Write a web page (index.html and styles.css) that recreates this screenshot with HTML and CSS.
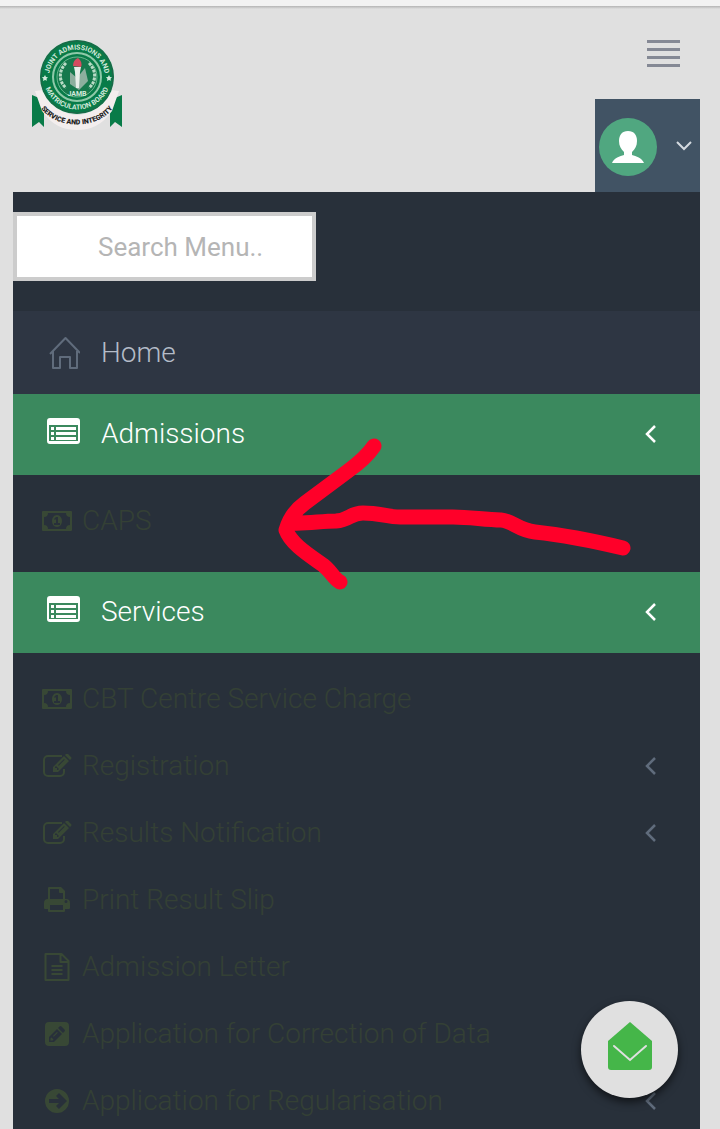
FILE: index.html
```html
<!DOCTYPE html>
<html lang="en">
<head>
  <meta charset="UTF-8">
  <meta name="viewport" content="width=device-width, initial-scale=1">
  <title>JAMB e-Facility</title>
  <link rel="stylesheet" href="styles.css">
</head>
<body>
  <!-- shared icons -->
  <svg class="sprite" aria-hidden="true">
    <symbol id="i-list" viewBox="0 0 33 26">
      <path fill="currentColor" fill-rule="evenodd" d="M3 0h27a3 3 0 0 1 3 3v20a3 3 0 0 1-3 3H3a3 3 0 0 1-3-3V3a3 3 0 0 1 3-3zM2 7v16h29V7zM4 9h3v3H4zM9 9h20v3H9zM4 14h3v3H4zM9 14h20v3H9zM4 19h3v3H4zM9 19h20v3H9z"/>
    </symbol>
    <symbol id="i-money" viewBox="0 0 30 20">
      <path fill="currentColor" fill-rule="evenodd" d="M1 0h28a1 1 0 0 1 1 1v18a1 1 0 0 1-1 1H1a1 1 0 0 1-1-1V1a1 1 0 0 1 1-1zM6 2a4 4 0 0 1-4 4v8a4 4 0 0 1 4 4h18a4 4 0 0 1 4-4V6a4 4 0 0 1-4-4zM15 4c3 0 5 3 5 6s-2 6-5 6-5-3-5-6 2-6 5-6zM14 6l-2 2 1 1 1-1v4h-2v2h6v-2h-2V6z"/>
    </symbol>
    <symbol id="i-edit" viewBox="0 0 30 24">
      <path fill="none" stroke="currentColor" stroke-width="2" d="M20 2H6a4 4 0 0 0-4 4v12a4 4 0 0 0 4 4h12a4 4 0 0 0 4-4v-3"/>
      <path fill="currentColor" fill-rule="evenodd" d="M11 13L22 2l5 5-11 11h-5zM23 1l1-1q1-1 2 0l3 3q1 1 0 2l-1 1zM13 13v1h2v2h1l1-1-3-3zM16 11l.7.7 6-6-.7-.7z"/>
    </symbol>
    <symbol id="i-print" viewBox="0 0 26 25">
      <path fill="currentColor" fill-rule="evenodd" d="M4 12V1q0-1 1-1h12l4 4v8h1a4 4 0 0 1 4 4v5q0 1-1 1h-4v2q0 1-1 1H5q-1 0-1-1v-2H1q-1 0-1-1v-5a4 4 0 0 1 4-4zM6 2v10h13V6h-3q-1 0-1-1V2zM6 18v5h13v-5zM22 13a1 1 0 1 0 0 3 1 1 0 0 0 0-3z"/>
    </symbol>
    <symbol id="i-file" viewBox="0 0 25 28">
      <path fill="none" stroke="currentColor" stroke-width="2" stroke-linejoin="round" d="M1 1h16l7 7v19H1zM16 1v8h8M7 13h11M7 17h11M7 21h11"/>
    </symbol>
    <symbol id="i-pencil" viewBox="0 0 24 24">
      <path fill="currentColor" fill-rule="evenodd" d="M4 0h16a4 4 0 0 1 4 4v16a4 4 0 0 1-4 4H4a4 4 0 0 1-4-4V4a4 4 0 0 1 4-4zM4 15v5h5l8-8-5-5zM13 6l5 5 1.500-1.500q1-1 0-2l-3-3q-1-1-2 0zM5.500 16.500l1-1 2 2-1 1h-2zM8 14l4-4 .8.8-4 4z"/>
    </symbol>
    <symbol id="i-go" viewBox="0 0 24 24">
      <path fill="currentColor" fill-rule="evenodd" d="M12 0a12 12 0 1 1 0 24 12 12 0 0 1 0-24zM11 7l3 3H4v4h10l-3 3 3 3 8-8-8-8z"/>
    </symbol>
    <symbol id="i-left" viewBox="0 0 12 20">
      <path fill="none" stroke="currentColor" stroke-width="2.500" d="M10 2L2 10l8 8"/>
    </symbol>
  </svg>

  <div class="page">
    <header class="header">
      <div class="topbar">
        <a class="logo" href="#" aria-label="Joint Admissions and Matriculation Board">
          <svg width="94" height="92" viewBox="0 0 94 92">
            <path fill="#087b48" d="M2 57l12 5v27l-5-5-7 5zM92 57l-12 5v27l5-5 7 5z"/>
            <path fill="#f3eeee" d="M5 53l8-1c9 18 24 25 34 25s25-7 34-25l8 1-7 20C72 87 61 92 47 92S22 87 12 73z"/>
            <circle cx="47" cy="39" r="37" fill="#087b48"/>
            <circle cx="47" cy="39" r="36" fill="none" stroke="#226348"/>
            <circle cx="47" cy="39" r="24" fill="none" stroke="#8fc9a9" stroke-width="2"/>
            <circle cx="47" cy="39" r="20" fill="#16794d" stroke="#69b78e"/>
            <path id="arc-top" fill="none" d="M20 47a28 28 0 1 1 54 0"/>
            <path id="arc-low" fill="none" d="M15 49a34 34 0 0 0 64 0"/>
            <path id="arc-ribbon" fill="none" d="M9 67c14 26 62 26 76 0"/>
            <text class="seal-text"><textPath href="#arc-top" startOffset="50%">JOINT ADMISSIONS AND</textPath></text>
            <text class="seal-text"><textPath href="#arc-low" startOffset="50%">MATRICULATION BOARD</textPath></text>
            <text class="ribbon-text"><textPath href="#arc-ribbon" startOffset="50%">SERVICE AND INTEGRITY</textPath></text>
            <path fill="none" stroke="#b9dbc6" stroke-width="3" stroke-dasharray="3 1" d="M36 25c-8 8-7 19 0 25M59 25c8 8 7 19 0 25"/>
            <path fill="#8caf9e" d="M40 34l7 6 8-10 3 13-9 9-9-6z"/>
            <path fill="#e7eee9" d="M44 29h7l-1 5-1 16h-3l-1-16z"/>
            <path fill="#d54c60" d="M43 28q0-6 5-8 5 4 3 9z"/>
            <text class="seal-text" x="47" y="58">JAMB</text>
            <path fill="#d3e9dc" d="M15 37l1 2 2 .3-1.500 1.500.4 2L15 42l-2 1 .4-2.200-1.500-1.500 2-.3zM79 37l1 2 2 .3-1.500 1.500.4 2L79 42l-2 1 .4-2.200-1.500-1.500 2-.3z"/>
          </svg>
        </a>
        <button class="menu-toggle" aria-label="Toggle menu"><span></span><span></span><span></span><span></span></button>
      </div>
      <button class="user" aria-label="User menu">
        <svg width="60" height="60" viewBox="0 0 60 60">
          <circle cx="30" cy="30" r="29" fill="#50a780"/>
          <path fill="#fff" d="M30 14c6 0 9 4 9 10 0 5-2 8-5 11v3c4 1 10 3 12 8H14c2-5 8-7 12-8v-3c-3-3-5-6-5-11 0-6 3-10 9-10z"/>
        </svg>
        <svg width="16" height="12" viewBox="0 0 16 12"><path fill="none" stroke="#d4dae0" stroke-width="2" d="M1 1l7 7 7-7"/></svg>
      </button>
    </header>

    <nav class="sidebar">
      <input class="search" type="text" placeholder="Search Menu.." aria-label="Search Menu">
      <ul class="menu">
        <li>
          <a class="item home" href="#">
            <svg class="icon" width="33" height="34" viewBox="0 0 33 34"><path fill="none" stroke="currentColor" stroke-width="2" stroke-linejoin="round" d="M3 18L18.500 2 33 17M6 15v17h7V21h10v11h7V15"/></svg>
            <span>Home</span>
          </a>
        </li>
        <li>
          <a class="item section" href="#">
            <svg class="icon" width="33" height="26"><use href="#i-list"/></svg>
            <span>Admissions</span>
            <svg class="arrow" width="12" height="20"><use href="#i-left"/></svg>
          </a>
          <ul class="submenu">
            <li><a class="sub" href="#"><svg class="icon" width="30" height="20"><use href="#i-money"/></svg><span>CAPS</span></a></li>
          </ul>
        </li>
        <li>
          <a class="item section" href="#">
            <svg class="icon" width="33" height="26"><use href="#i-list"/></svg>
            <span>Services</span>
            <svg class="arrow" width="12" height="20"><use href="#i-left"/></svg>
          </a>
          <ul class="submenu">
            <li><a class="sub" href="#"><svg class="icon" width="30" height="20"><use href="#i-money"/></svg><span>CBT Centre Service Charge</span></a></li>
            <li><a class="sub" href="#"><svg class="icon" width="30" height="24"><use href="#i-edit"/></svg><span>Registration</span><svg class="arrow" width="12" height="20"><use href="#i-left"/></svg></a></li>
            <li><a class="sub" href="#"><svg class="icon" width="30" height="24"><use href="#i-edit"/></svg><span>Results Notification</span><svg class="arrow" width="12" height="20"><use href="#i-left"/></svg></a></li>
            <li><a class="sub" href="#"><svg class="icon" width="30" height="25"><use href="#i-print"/></svg><span>Print Result Slip</span></a></li>
            <li><a class="sub" href="#"><svg class="icon" width="30" height="28"><use href="#i-file"/></svg><span>Admission Letter</span></a></li>
            <li><a class="sub" href="#"><svg class="icon" width="30" height="24"><use href="#i-pencil"/></svg><span>Application for Correction of Data</span></a></li>
            <li><a class="sub" href="#"><svg class="icon" width="30" height="24"><use href="#i-go"/></svg><span>Application for Regularisation</span><svg class="arrow" width="12" height="20"><use href="#i-left"/></svg></a></li>
          </ul>
        </li>
      </ul>
    </nav>

    <!-- hand-drawn pointer to CAPS -->
    <svg class="pointer" width="360" height="160" viewBox="274 434 360 160" aria-hidden="true">
      <path d="M374 446Q366 458 348 471L305 503Q291 513 286 530C291 544 309 555 323 565C331 571 334 579 340 582M291 523C307 524 321 521 336 521C350 520 350 513 363 513C380 513 387 517 400 517H453C471 517 485 520 501 520C513 521 518 530 535 532Q573 536 623 548"/>
    </svg>
  </div>

  <button class="mail" aria-label="Messages">
    <svg width="46" height="50" viewBox="0 0 46 50">
      <path fill="#45b649" d="M23 1l22 19v26q0 3-3 3H4q-3 0-3-3V20z"/>
      <path fill="none" stroke="#e0e0e0" stroke-width="2" stroke-linecap="round" d="M7 25l16 14 16-14"/>
    </svg>
  </button>
</body>
</html>
```

FILE: styles.css
```css
* {
  box-sizing: border-box;
}

body {
  margin: 0;
  background: #e0e0e0;
  font-family: Roboto, "Liberation Sans", sans-serif;
  font-size: 28px;
  font-weight: 300;
}

ul {
  list-style: none;
  margin: 0;
  padding: 0;
}

a {
  text-decoration: none;
}

button {
  border: 0;
  padding: 0;
  cursor: pointer;
}

svg {
  display: block;
  flex-shrink: 0;
}

.sprite {
  position: absolute;
  width: 0;
  height: 0;
}

.page {
  position: relative;
  height: 100vh;
  overflow: hidden;
  padding: 0 20px 0 13px;
  border-top: 6px solid #f2f2f2;
  background: linear-gradient(#b4b4b4, #e0e0e0 3px);
}

/* Header */
.topbar {
  display: flex;
  justify-content: space-between;
  align-items: flex-start;
  height: 93px;
  padding: 32px 20px 0 17px;
}

.menu-toggle {
  display: flex;
  flex-direction: column;
  gap: 5px;
  width: 33px;
  padding-top: 2px;
  background: none;
}

.menu-toggle span {
  height: 3px;
  background: #858995;
}

.user {
  display: flex;
  align-items: center;
  justify-content: space-between;
  width: 105px;
  height: 93px;
  margin-left: auto;
  padding: 2px 8px 0 3px;
  background: #415364;
}

.seal-text {
  fill: #d3e9dc;
  font-size: 7px;
  font-weight: 700;
  text-anchor: middle;
}

.ribbon-text {
  fill: #222;
  font-size: 7px;
  font-weight: 900;
  text-anchor: middle;
}

/* Sidebar menu */
.sidebar {
  padding-top: 20px;
  background: #28303a;
}

.search {
  display: block;
  width: 303px;
  height: 69px;
  margin-bottom: 30px;
  padding: 0 8px 0 81px;
  border: 4px solid #ccc;
  background: #fff;
  font: 400 26px Roboto, "Liberation Sans", sans-serif;
}

.search::placeholder {
  color: #b5b5b5;
}

.item {
  display: flex;
  align-items: center;
  gap: 21px;
  height: 81px;
  padding: 0 43px 0 34px;
}

.section {
  padding-bottom: 2px;
  background: #3b895e;
  color: #fff;
}

.section .icon {
  margin-bottom: 6px;
}

.home {
  height: 83px;
  background: #2e3643;
  color: #b4bcc8;
}

.home .icon {
  color: #606c7c;
}

.submenu {
  padding: 12px 0 18px;
}

.sub {
  display: flex;
  align-items: center;
  gap: 10px;
  height: 67px;
  padding: 0 43px 0 29px;
  color: #344035;
}

.sub .icon {
  color: #384835;
}

.arrow {
  margin-left: auto;
}

.sub .arrow {
  color: #606c7c;
}

/* Overlays */
.pointer {
  position: absolute;
  top: 428px;
  left: 274px;
  fill: none;
  stroke: #ff0029;
  stroke-width: 15;
  stroke-linecap: round;
  stroke-linejoin: round;
  pointer-events: none;
}

.mail {
  position: fixed;
  right: 42px;
  bottom: 31px;
  display: grid;
  place-items: center;
  width: 97px;
  height: 97px;
  padding-bottom: 8px;
  border-radius: 50%;
  background: #e0e0e0;
  box-shadow: 0 4px 8px rgba(0, 0, 0, 0.6);
}
```
